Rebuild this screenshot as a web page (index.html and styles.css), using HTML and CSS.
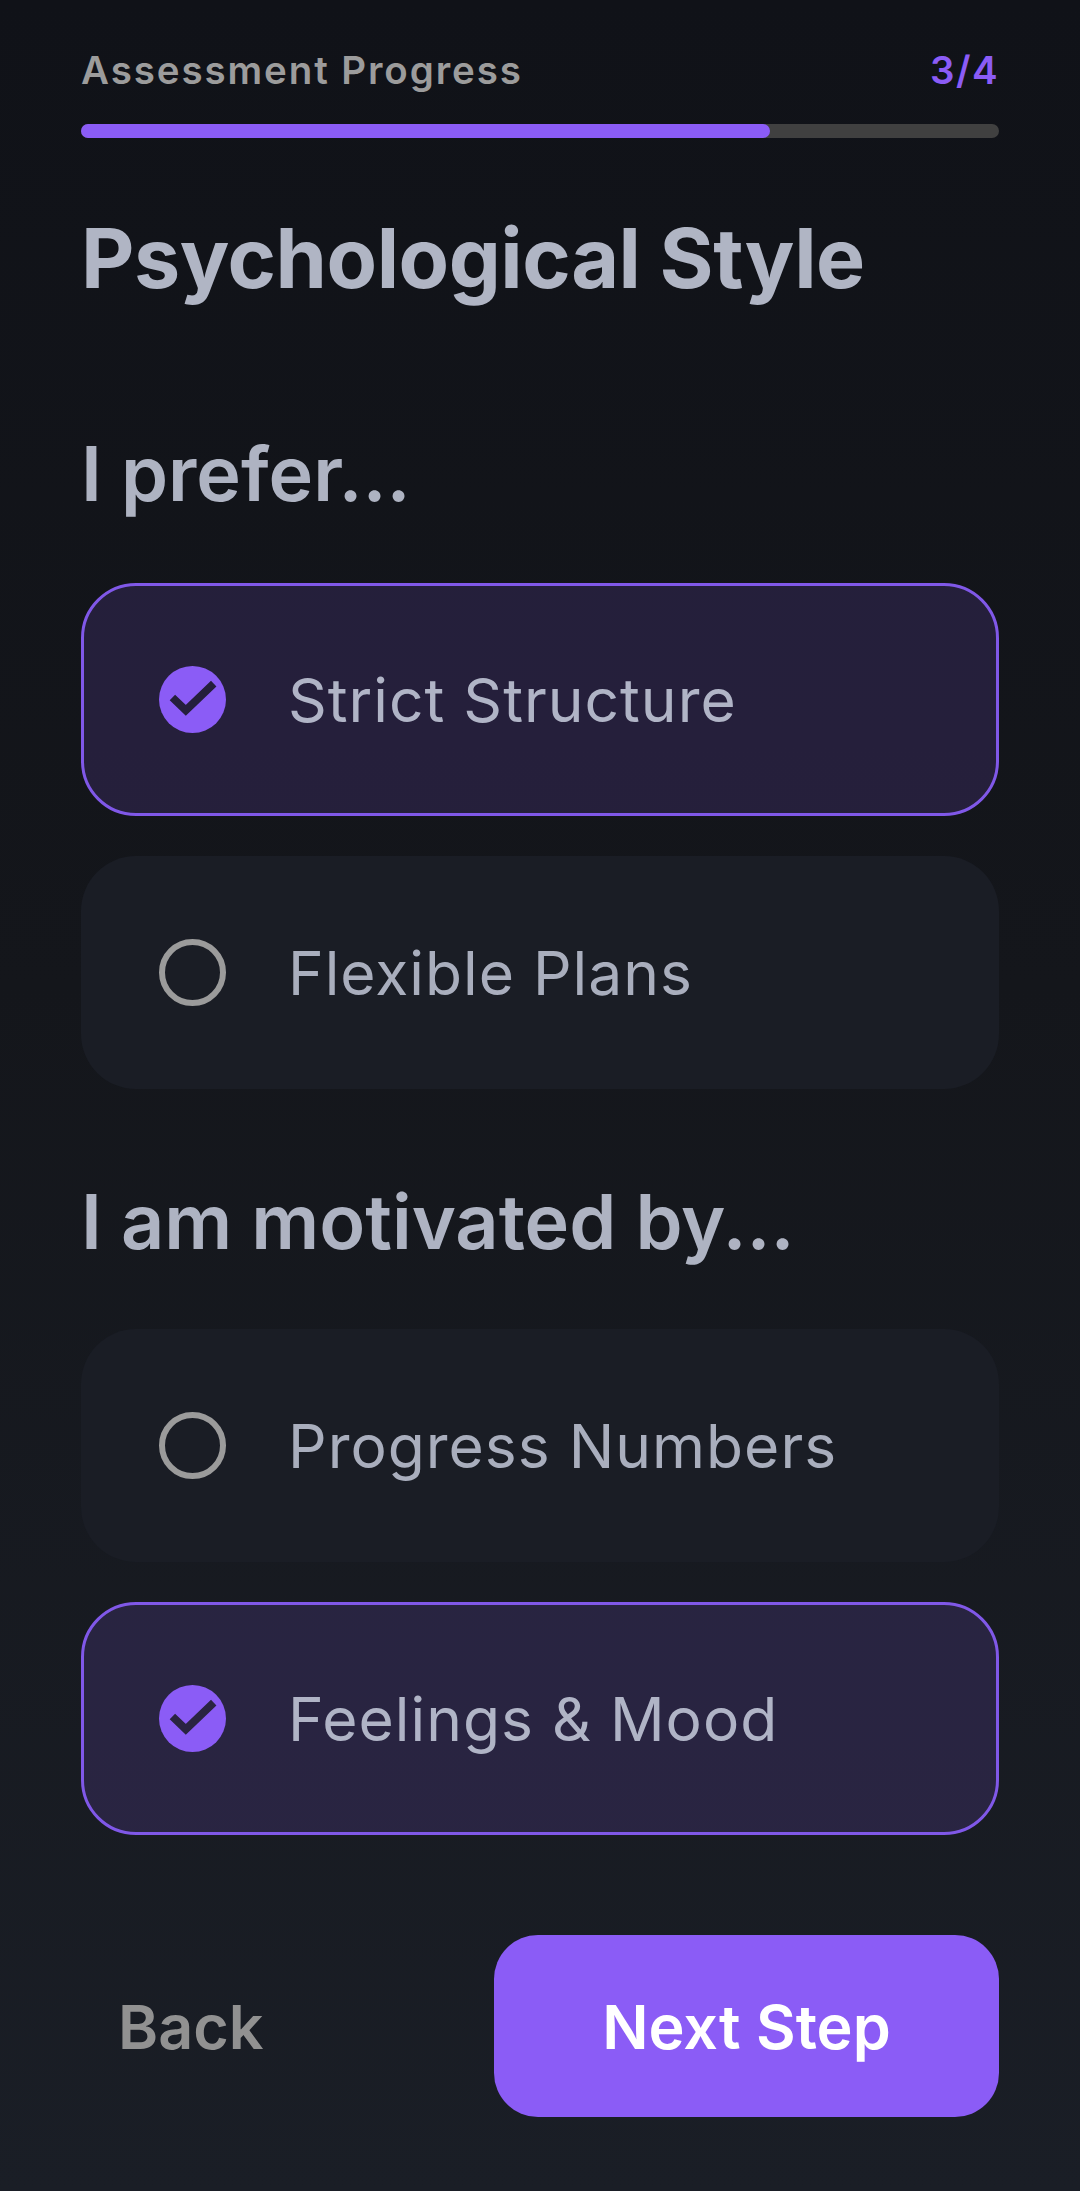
FILE: index.html
```html
<!DOCTYPE html>
<html lang="en">
<head>
    <meta charset="UTF-8">
    <title>Psychological Style</title>
    <link rel="stylesheet" href="styles.css">
</head>
<body>
    <div class="screen">
        <div class="progress-head">
            <span class="progress-label">Assessment Progress</span>
            <span class="progress-count">3/4</span>
        </div>
        <div class="progress-track"><div class="progress-fill"></div></div>

        <h1>Psychological Style</h1>

        <h2>I prefer...</h2>
        <div class="options">
            <div class="option selected">
                <svg class="check" viewBox="0 0 24 24"><circle cx="12" cy="12" r="12" fill="#8b5cf6"/><path d="M4.8 11.3 L9.6 15.9 L19.6 6.3" fill="none" stroke="#251f3c" stroke-width="2.8"/></svg>
                <span>Strict Structure</span>
            </div>
            <div class="option">
                <span class="radio"></span>
                <span>Flexible Plans</span>
            </div>
        </div>

        <h2 class="second">I am motivated by...</h2>
        <div class="options">
            <div class="option">
                <span class="radio"></span>
                <span>Progress Numbers</span>
            </div>
            <div class="option selected">
                <svg class="check" viewBox="0 0 24 24"><circle cx="12" cy="12" r="12" fill="#8b5cf6"/><path d="M4.8 11.3 L9.6 15.9 L19.6 6.3" fill="none" stroke="#2a2442" stroke-width="2.8"/></svg>
                <span>Feelings &amp; Mood</span>
            </div>
        </div>

        <div class="actions">
            <button class="back-button">Back</button>
            <button class="next-button">Next Step</button>
        </div>
    </div>
</body>
</html>
```

FILE: styles.css
```css
html, body {
    margin: 0;
    padding: 0;
}

body {
    font-family: 'Inter', sans-serif;
    background: linear-gradient(180deg, #101218 0%, #14161b 45%, #1a1e26 100%);
    height: 2191px;
    overflow: hidden;
}

.screen {
    padding: 46px 81px 0;
}

.progress-head {
    display: flex;
    justify-content: space-between;
    align-items: center;
    height: 48px;
}

.progress-label {
    font-size: 38.5px;
    font-weight: 600;
    letter-spacing: 1.9px;
    color: #9c9c9c;
}

.progress-count {
    font-size: 38.5px;
    font-weight: 600;
    letter-spacing: 1.4px;
    color: #8b5cf6;
}

.progress-track {
    margin-top: 30px;
    height: 14px;
    border-radius: 7px;
    background-color: #404040;
}

.progress-fill {
    width: 75%;
    height: 100%;
    border-radius: 7px;
    background-color: #8b5cf6;
}

h1 {
    margin: 75px 0 0;
    height: 90px;
    line-height: 90px;
    font-size: 82.5px;
    font-weight: 700;
    color: #b0b5c4;
    letter-spacing: -0.45px;
}

h2 {
    margin: 131px 0 0;
    height: 80px;
    line-height: 80px;
    font-size: 75.5px;
    font-weight: 600;
    color: #aeb3c2;
}

h2.second {
    margin: 93px 0 -2px;
}

.options {
    margin-top: 69px;
    display: flex;
    flex-direction: column;
    gap: 40px;
}

.option {
    display: flex;
    align-items: center;
    gap: 62px;
    box-sizing: border-box;
    height: 233px;
    padding: 0 75px;
    border: 3.5px solid transparent;
    border-radius: 55px;
    background-color: #1a1d25;
    font-size: 60.5px;
    letter-spacing: 1px;
    color: #a9aebd;
}

.option.selected {
    border-color: #8058e8;
    background-color: rgba(139, 92, 246, 0.15);
    color: #b0b4c6;
}

.check {
    width: 67px;
    height: 67px;
    flex-shrink: 0;
}

.radio {
    width: 67px;
    height: 67px;
    flex-shrink: 0;
    box-sizing: border-box;
    border: 6px solid #9b9b9b;
    border-radius: 50%;
}

.actions {
    margin-top: 100px;
    display: flex;
    justify-content: space-between;
    align-items: center;
}

button {
    font-family: 'Inter', sans-serif;
    font-size: 61px;
    font-weight: 600;
    border: none;
    padding-top: 3px;
    cursor: pointer;
}

.back-button {
    padding-left: 37px;
    padding-right: 37px;
    background: none;
    color: #919191;
}

.next-button {
    width: 505px;
    height: 182px;
    border-radius: 44px;
    background-color: #8b5cf6;
    color: #ffffff;
}
```
